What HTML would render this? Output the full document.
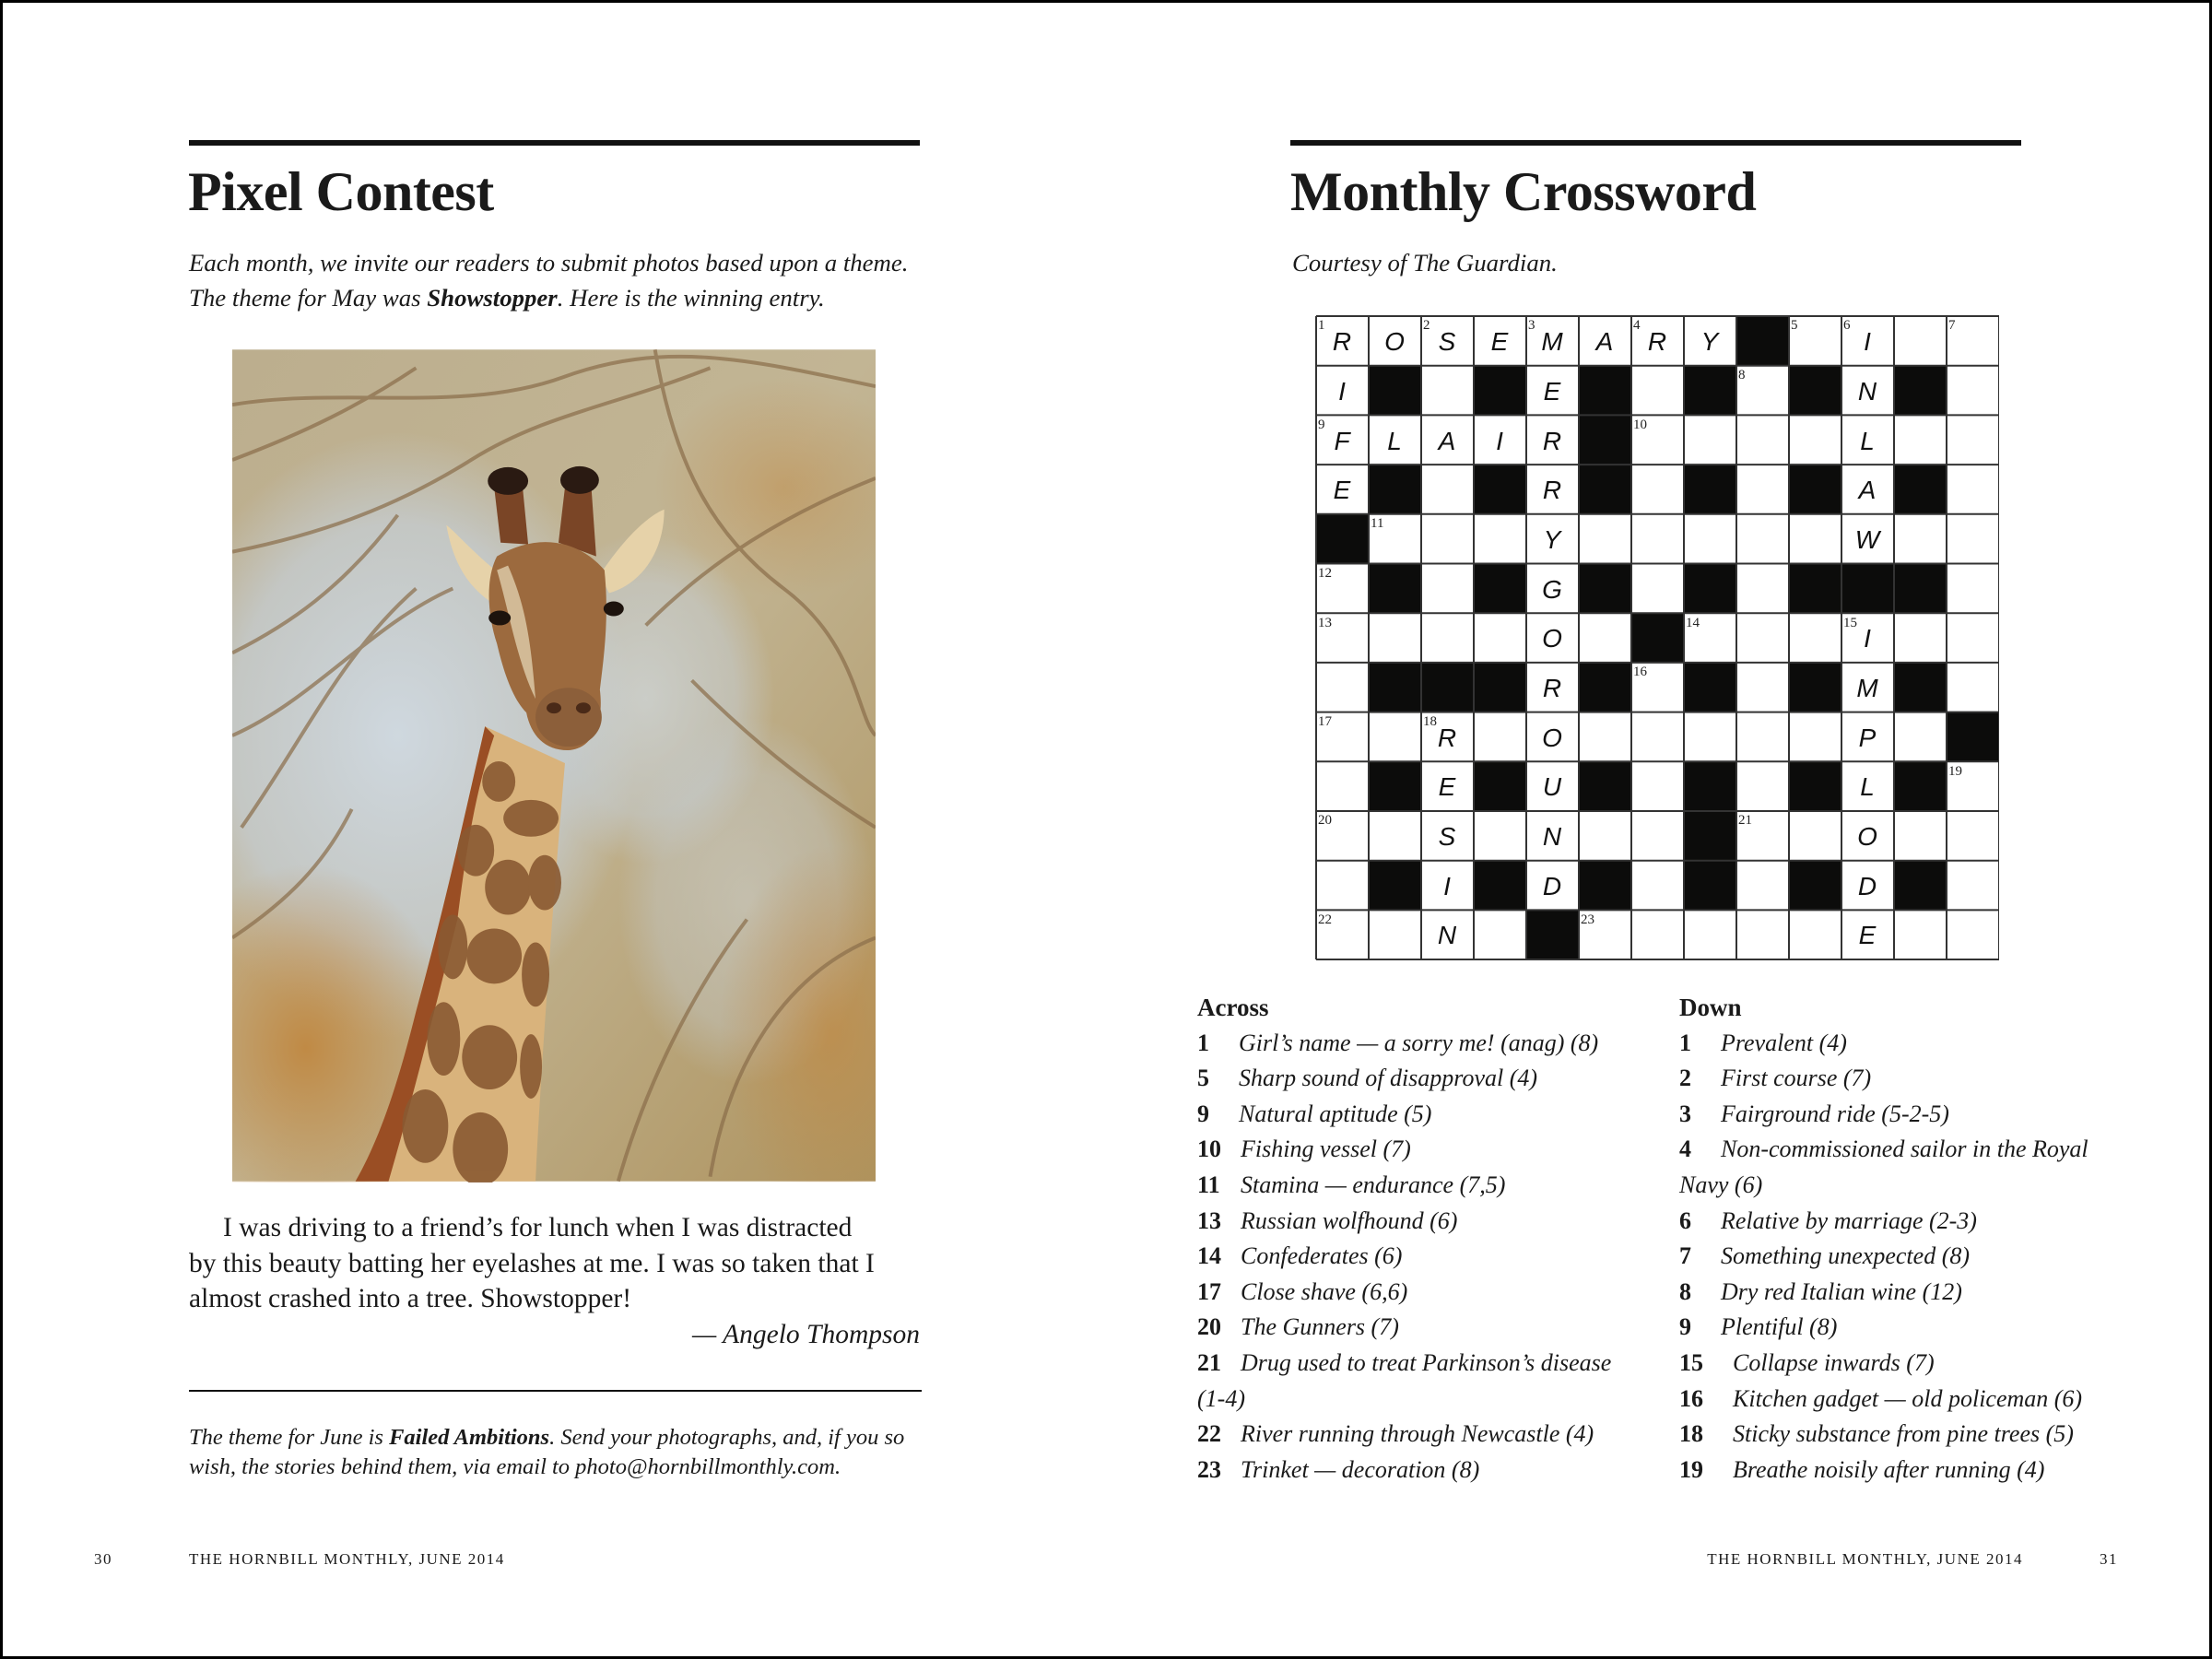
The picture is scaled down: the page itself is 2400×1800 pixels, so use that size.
<!DOCTYPE html>
<html><head><meta charset="utf-8"><style>
*{margin:0;padding:0;box-sizing:border-box}
html,body{width:2400px;height:1800px;background:#fff;overflow:hidden}
body{position:relative;font-family:"Liberation Serif",serif;color:#1a1a1a}
.frame{position:absolute;left:0;top:0;width:2400px;height:1800px;border:3px solid #000;pointer-events:none}
.a{position:absolute;white-space:nowrap}
.rule{position:absolute;background:#111}
.title{font-weight:bold;font-size:60px;line-height:1;letter-spacing:-0.5px}
.it{font-style:italic}
.intro{font-size:26.8px;line-height:38px}
.body{font-size:29.5px;line-height:38.5px}
.foot{font-size:17px;letter-spacing:1.5px;line-height:1}
.clues{position:absolute;font-size:26px;line-height:38.6px}
.clues div{white-space:nowrap}
.clues b{display:inline-block;font-weight:bold}
.clues h4{font-size:27px;font-weight:bold;line-height:38.6px}
</style></head><body>
<div class="frame"></div>

<!-- LEFT PAGE -->
<div class="rule" style="left:205px;top:152px;width:793px;height:6px"></div>
<div class="a title" style="left:204px;top:178px">Pixel Contest</div>
<div class="a intro it" style="left:205px;top:266px">Each month, we invite our readers to submit photos based upon a theme.<br>The theme for May was <b>Showstopper</b>. Here is the winning entry.</div>

<svg class="a" style="left:252px;top:378px" width="698" height="905" viewBox="0 0 700 905">
<defs>
<linearGradient id="bg" x1="0" y1="0" x2="1" y2="1">
<stop offset="0" stop-color="#bcae8e"/><stop offset="0.5" stop-color="#c2b594"/><stop offset="1" stop-color="#ae935e"/></linearGradient>
<radialGradient id="sky" cx="0.5" cy="0.5" r="0.5"><stop offset="0" stop-color="#cfd8df"/><stop offset="0.7" stop-color="#c5ccd0" stop-opacity="0.8"/><stop offset="1" stop-color="#c5ccd0" stop-opacity="0"/></radialGradient>
<radialGradient id="org" cx="0.5" cy="0.5" r="0.5"><stop offset="0" stop-color="#c08a45"/><stop offset="1" stop-color="#c08a45" stop-opacity="0"/></radialGradient>
</defs>
<rect width="700" height="905" fill="url(#bg)"/>
<ellipse cx="180" cy="420" rx="260" ry="330" fill="url(#sky)"/>
<ellipse cx="450" cy="380" rx="140" ry="180" fill="url(#sky)" opacity="0.7"/>
<ellipse cx="560" cy="600" rx="140" ry="200" fill="url(#sky)" opacity="0.5"/>
<ellipse cx="80" cy="760" rx="160" ry="200" fill="url(#org)"/>
<ellipse cx="650" cy="740" rx="120" ry="200" fill="url(#org)" opacity="0.7"/>
<ellipse cx="600" cy="150" rx="140" ry="120" fill="url(#org)" opacity="0.5"/>
<g stroke="#8a6d4a" stroke-width="4" fill="none" opacity="0.7">
<path d="M0 60 C120 40 250 70 360 30 S560 10 700 40"/>
<path d="M0 120 C80 90 140 60 200 20"/>
<path d="M0 220 C100 200 180 170 260 120 S420 60 520 20"/>
<path d="M0 330 C60 300 120 260 180 180"/>
<path d="M10 520 C80 420 120 330 200 260"/>
<path d="M0 420 C90 380 150 300 240 260"/>
<path d="M460 0 C480 120 520 200 600 260 S680 400 700 420"/>
<path d="M700 140 C600 180 520 230 450 300"/>
<path d="M700 520 C620 470 560 420 500 360"/>
<path d="M520 900 C540 780 600 680 700 640"/>
<path d="M420 905 C450 800 500 700 560 620"/>
<path d="M0 640 C60 600 100 560 130 500"/>
</g>
<path d="M275 410 C250 520 230 610 200 720 C180 800 160 860 134 905 L330 905 C335 800 345 650 362 450 Z" fill="#d9b37c"/>
<path d="M275 410 C250 520 230 610 200 720 C180 800 160 860 134 905 L170 905 C195 820 220 720 245 620 C255 540 265 480 285 420Z" fill="#9a4e24"/>
<g fill="#8a5a32" opacity="0.9">
<ellipse cx="290" cy="470" rx="18" ry="22"/><ellipse cx="325" cy="510" rx="30" ry="20"/>
<ellipse cx="265" cy="545" rx="20" ry="28"/><ellipse cx="300" cy="585" rx="25" ry="30"/><ellipse cx="340" cy="580" rx="18" ry="30"/>
<ellipse cx="240" cy="650" rx="16" ry="35"/><ellipse cx="285" cy="660" rx="30" ry="30"/><ellipse cx="330" cy="680" rx="15" ry="35"/>
<ellipse cx="230" cy="750" rx="18" ry="40"/><ellipse cx="280" cy="770" rx="30" ry="35"/><ellipse cx="325" cy="780" rx="12" ry="35"/>
<ellipse cx="210" cy="845" rx="25" ry="40"/><ellipse cx="270" cy="870" rx="30" ry="40"/>
</g>
<path d="M300 250 C270 230 245 200 233 191 C240 230 255 260 290 280Z" fill="#e6d2a9"/>
<path d="M400 245 C430 200 455 180 470 174 C470 220 445 255 410 265Z" fill="#e6d2a9"/>
<path d="M292 210 L285 150 L315 140 L322 212Z" fill="#7a4526"/>
<path d="M355 210 L362 150 L390 140 L396 225Z" fill="#7a4526"/>
<ellipse cx="300" cy="143" rx="22" ry="15" fill="#2a1a12"/>
<ellipse cx="378" cy="142" rx="21" ry="15" fill="#2a1a12"/>
<path d="M288 225 C330 200 375 205 405 240 C410 290 405 330 400 370 C405 410 390 435 365 436 C340 436 325 420 320 395 C305 380 295 350 288 320 C278 290 275 250 288 225Z" fill="#9c6a3e"/>
<path d="M288 240 C300 280 310 340 330 380 C325 320 320 280 300 235Z" fill="#d8c3a0" opacity="0.9"/>
<ellipse cx="366" cy="400" rx="36" ry="32" fill="#8c5f3a"/>
<ellipse cx="350" cy="390" rx="8" ry="6" fill="#4a2a18"/><ellipse cx="382" cy="390" rx="8" ry="6" fill="#4a2a18"/>
<ellipse cx="291" cy="292" rx="12" ry="8" fill="#1d130d"/>
<ellipse cx="415" cy="282" rx="11" ry="8" fill="#1d130d"/>
</svg>

<div class="a body" style="left:205px;top:1313px;width:800px;white-space:normal"><span style="padding-left:37px">I was driving to a friend’s for lunch when I was distracted</span><br>by this beauty batting her eyelashes at me. I was so taken that I<br>almost crashed into a tree. Showstopper!</div>
<div class="a body it" style="right:1402px;top:1429px">— Angelo Thompson</div>
<div class="rule" style="left:205px;top:1508px;width:795px;height:2px"></div>
<div class="a it" style="left:205px;top:1544px;font-size:24.5px;line-height:32px">The theme for June is <b>Failed Ambitions</b>. Send your photographs, and, if you so<br>wish, the stories behind them, via email to photo@hornbillmonthly.com.</div>

<div class="a foot" style="left:102px;top:1683px">30</div>
<div class="a foot" style="left:205px;top:1683px">THE HORNBILL MONTHLY, JUNE 2014</div>

<!-- RIGHT PAGE -->
<div class="rule" style="left:1400px;top:152px;width:793px;height:6px"></div>
<div class="a title" style="left:1400px;top:178px">Monthly Crossword</div>
<div class="a intro it" style="left:1402px;top:266px">Courtesy of The Guardian.</div>

<svg class="a" style="left:1427px;top:342px" width="742" height="700" viewBox="-1 -1 742 700">
<rect x="0" y="0" width="741" height="698" fill="#fff"/>
<g fill="#0c0c0b">
<rect x="456" y="0" width="57" height="53.7"/>
<rect x="57" y="53.7" width="57" height="53.7"/><rect x="171" y="53.7" width="57" height="53.7"/><rect x="285" y="53.7" width="57" height="53.7"/><rect x="399" y="53.7" width="57" height="53.7"/><rect x="513" y="53.7" width="57" height="53.7"/><rect x="627" y="53.7" width="57" height="53.7"/>
<rect x="285" y="107.4" width="57" height="53.7"/>
<rect x="57" y="161.1" width="57" height="53.7"/><rect x="171" y="161.1" width="57" height="53.7"/><rect x="285" y="161.1" width="57" height="53.7"/><rect x="399" y="161.1" width="57" height="53.7"/><rect x="513" y="161.1" width="57" height="53.7"/><rect x="627" y="161.1" width="57" height="53.7"/>
<rect x="0" y="214.8" width="57" height="53.7"/>
<rect x="57" y="268.5" width="57" height="53.7"/><rect x="171" y="268.5" width="57" height="53.7"/><rect x="285" y="268.5" width="57" height="53.7"/><rect x="399" y="268.5" width="57" height="53.7"/><rect x="513" y="268.5" width="171" height="53.7"/>
<rect x="342" y="322.2" width="57" height="53.7"/>
<rect x="57" y="375.9" width="171" height="53.7"/><rect x="285" y="375.9" width="57" height="53.7"/><rect x="399" y="375.9" width="57" height="53.7"/><rect x="513" y="375.9" width="57" height="53.7"/><rect x="627" y="375.9" width="57" height="53.7"/>
<rect x="684" y="429.6" width="57" height="53.7"/>
<rect x="57" y="483.3" width="57" height="53.7"/><rect x="171" y="483.3" width="57" height="53.7"/><rect x="285" y="483.3" width="57" height="53.7"/><rect x="399" y="483.3" width="57" height="53.7"/><rect x="513" y="483.3" width="57" height="53.7"/><rect x="627" y="483.3" width="57" height="53.7"/>
<rect x="399" y="537" width="57" height="53.7"/>
<rect x="57" y="590.7" width="57" height="53.7"/><rect x="171" y="590.7" width="57" height="53.7"/><rect x="285" y="590.7" width="57" height="53.7"/><rect x="399" y="590.7" width="57" height="53.7"/><rect x="513" y="590.7" width="57" height="53.7"/><rect x="627" y="590.7" width="57" height="53.7"/>
<rect x="228" y="644.4" width="57" height="53.7"/>
</g>
<g stroke="#333" stroke-width="2">
<path d="M0 0V698M57 0V698M114 0V698M171 0V698M228 0V698M285 0V698M342 0V698M399 0V698M456 0V698M513 0V698M570 0V698M627 0V698M684 0V698M741 0V698"/>
<path d="M0 0H741M0 53.7H741M0 107.4H741M0 161.1H741M0 214.8H741M0 268.5H741M0 322.2H741M0 375.9H741M0 429.6H741M0 483.3H741M0 537H741M0 590.7H741M0 644.4H741M0 698H741"/>
</g>
<g font-family="Liberation Serif,serif" font-size="15" fill="#222">
<text x="2" y="14">1</text><text x="116" y="14">2</text><text x="230" y="14">3</text><text x="344" y="14">4</text><text x="515" y="14">5</text><text x="572" y="14">6</text><text x="686" y="14">7</text>
<text x="458" y="68">8</text><text x="2" y="122">9</text><text x="344" y="122">10</text><text x="59" y="229">11</text><text x="2" y="283">12</text>
<text x="2" y="337">13</text><text x="401" y="337">14</text><text x="572" y="337">15</text><text x="344" y="390">16</text>
<text x="2" y="444">17</text><text x="116" y="444">18</text><text x="686" y="498">19</text><text x="2" y="551">20</text><text x="458" y="551">21</text>
<text x="2" y="659">22</text><text x="287" y="659">23</text>
</g>
<g font-family="Liberation Sans,sans-serif" font-style="italic" font-size="28" fill="#111" text-anchor="middle">
<text x="28" y="37">R</text><text x="85" y="37">O</text><text x="142" y="37">S</text><text x="199" y="37">E</text><text x="256" y="37">M</text><text x="313" y="37">A</text><text x="370" y="37">R</text><text x="427" y="37">Y</text><text x="598" y="37">I</text>
<text x="28" y="91">I</text><text x="256" y="91">E</text><text x="598" y="91">N</text>
<text x="28" y="145">F</text><text x="85" y="145">L</text><text x="142" y="145">A</text><text x="199" y="145">I</text><text x="256" y="145">R</text><text x="598" y="145">L</text>
<text x="28" y="198">E</text><text x="256" y="198">R</text><text x="598" y="198">A</text>
<text x="256" y="252">Y</text><text x="598" y="252">W</text>
<text x="256" y="306">G</text>
<text x="256" y="359">O</text><text x="598" y="359">I</text>
<text x="256" y="413">R</text><text x="598" y="413">M</text>
<text x="142" y="467">R</text><text x="256" y="467">O</text><text x="598" y="467">P</text>
<text x="142" y="520">E</text><text x="256" y="520">U</text><text x="598" y="520">L</text>
<text x="142" y="574">S</text><text x="256" y="574">N</text><text x="598" y="574">O</text>
<text x="142" y="628">I</text><text x="256" y="628">D</text><text x="598" y="628">D</text>
<text x="142" y="681">N</text><text x="598" y="681">E</text>
</g>
</svg>

<div class="clues" style="left:1299px;top:1074px">
<h4>Across</h4>
<div><b style="width:45px">1</b><i>Girl’s name — a sorry me! (anag) (8)</i></div>
<div><b style="width:45px">5</b><i>Sharp sound of disapproval (4)</i></div>
<div><b style="width:45px">9</b><i>Natural aptitude (5)</i></div>
<div><b style="width:47px">10</b><i>Fishing vessel (7)</i></div>
<div><b style="width:47px">11</b><i>Stamina — endurance (7,5)</i></div>
<div><b style="width:47px">13</b><i>Russian wolfhound (6)</i></div>
<div><b style="width:47px">14</b><i>Confederates (6)</i></div>
<div><b style="width:47px">17</b><i>Close shave (6,6)</i></div>
<div><b style="width:47px">20</b><i>The Gunners (7)</i></div>
<div><b style="width:47px">21</b><i>Drug used to treat Parkinson’s disease</i></div>
<div><i>(1-4)</i></div>
<div><b style="width:47px">22</b><i>River running through Newcastle (4)</i></div>
<div><b style="width:47px">23</b><i>Trinket — decoration (8)</i></div>
</div>
<div class="clues" style="left:1822px;top:1074px">
<h4>Down</h4>
<div><b style="width:45px">1</b><i>Prevalent (4)</i></div>
<div><b style="width:45px">2</b><i>First course (7)</i></div>
<div><b style="width:45px">3</b><i>Fairground ride (5-2-5)</i></div>
<div><b style="width:45px">4</b><i>Non-commissioned sailor in the Royal</i></div>
<div><i>Navy (6)</i></div>
<div><b style="width:45px">6</b><i>Relative by marriage (2-3)</i></div>
<div><b style="width:45px">7</b><i>Something unexpected (8)</i></div>
<div><b style="width:45px">8</b><i>Dry red Italian wine (12)</i></div>
<div><b style="width:45px">9</b><i>Plentiful (8)</i></div>
<div><b style="width:58px">15</b><i>Collapse inwards (7)</i></div>
<div><b style="width:58px">16</b><i>Kitchen gadget — old policeman (6)</i></div>
<div><b style="width:58px">18</b><i>Sticky substance from pine trees (5)</i></div>
<div><b style="width:58px">19</b><i>Breathe noisily after running (4)</i></div>
</div>

<div class="a foot" style="right:205px;top:1683px">THE HORNBILL MONTHLY, JUNE 2014</div>
<div class="a foot" style="left:2278px;top:1683px">31</div>
</body></html>
